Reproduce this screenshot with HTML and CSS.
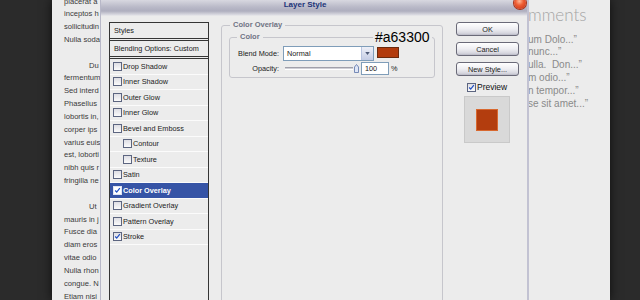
FILE: index.html
```html
<!DOCTYPE html>
<html lang="en">
<head>
    <meta charset="UTF-8">
    <meta name="viewport" content="width=device-width, initial-scale=1.0">
    <title>Layer Style</title>
    <link rel="stylesheet" href="styles.css">
</head>
<body>
    <div id="page">
        <div id="article">
            <p>
                <span>placerat a</span>
                <span>inceptos h</span>
                <span>sollicitudin</span>
                <span>Nulla soda</span>
            </p>
            <p class="indent">
                <span>Du</span>
                <span>fermentum</span>
                <span>Sed interd</span>
                <span>Phasellus</span>
                <span>lobortis in,</span>
                <span>corper ips</span>
                <span>varius euis</span>
                <span>est, loborti</span>
                <span>nibh quis r</span>
                <span>fringilla ne</span>
            </p>
            <p class="indent">
                <span>Ut</span>
                <span>mauris in j</span>
                <span>Fusce dia</span>
                <span>diam eros</span>
                <span>vitae odio</span>
                <span>Nulla rhon</span>
                <span>congue. N</span>
                <span>Etiam nisi</span>
            </p>
        </div>
        <div id="sidebar">
            <h2>mments</h2>
            <ul>
                <li>um Dolo...&rdquo;</li>
                <li>nunc...&rdquo;</li>
                <li>ulla.&nbsp; Don...&rdquo;</li>
                <li>m odio...&rdquo;</li>
                <li>n tempor...&rdquo;</li>
                <li>se sit amet...&rdquo;</li>
            </ul>
        </div>
    </div>

    <div id="layerStyle">
        <div class="titlebar">Layer Style<span class="close"></span></div>
        <div class="dialog-body">
            <div class="styles-list">
                <div class="styles-head">Styles</div>
                <div class="styles-head">Blending Options: Custom</div>
                <ul>
                    <li><span class="check"></span>Drop Shadow</li>
                    <li><span class="check"></span>Inner Shadow</li>
                    <li><span class="check"></span>Outer Glow</li>
                    <li><span class="check"></span>Inner Glow</li>
                    <li><span class="check"></span>Bevel and Emboss</li>
                    <li class="sub"><span class="check"></span>Contour</li>
                    <li class="sub"><span class="check"></span>Texture</li>
                    <li><span class="check"></span>Satin</li>
                    <li class="active"><span class="check"><svg viewBox="0 0 9 9" width="7" height="7"><path d="M1.5 4.5 L3.5 6.5 L7.5 1.5" /></svg></span>Color Overlay</li>
                    <li><span class="check"></span>Gradient Overlay</li>
                    <li><span class="check"></span>Pattern Overlay</li>
                    <li><span class="check"><svg viewBox="0 0 9 9" width="7" height="7"><path d="M1.5 4.5 L3.5 6.5 L7.5 1.5" /></svg></span>Stroke</li>
                </ul>
            </div>

            <fieldset class="group">
                <legend>Color Overlay</legend>
                <fieldset class="group inner">
                    <legend>Color</legend>
                    <div class="field-row">
                        <label>Blend Mode:</label>
                        <div class="select">
                            <span class="select-value">Normal</span>
                            <span class="select-arrow"><svg viewBox="0 0 6 4" width="5" height="3"><path d="M0 0 L6 0 L3 4 Z" /></svg></span>
                        </div>
                        <span class="swatch"></span>
                    </div>
                    <div class="field-row small">
                        <label>Opacity:</label>
                        <span class="slider"></span>
                        <svg class="thumb" viewBox="0 0 5 9" width="5" height="9"><path d="M0.5 3 L2.5 0.5 L4.5 3 L4.5 8.5 L0.5 8.5 Z" /></svg>
                        <span class="num-input">100</span>
                        <span class="unit">%</span>
                    </div>
                </fieldset>
            </fieldset>

            <div class="actions">
                <button>OK</button>
                <button>Cancel</button>
                <button>New Style...</button>
                <label class="preview-check"><span class="check"><svg viewBox="0 0 9 9" width="7" height="7"><path d="M1.5 4.5 L3.5 6.5 L7.5 1.5" /></svg></span>Preview</label>
                <div class="preview"><div class="preview-swatch"></div></div>
            </div>
        </div>
        <div class="hex-note">#a63300</div>
    </div>
</body>
</html>
```

FILE: styles.css
```css
body {
    margin: 0;
    height: 300px;
    overflow: hidden;
    background-color: #2b2b2b;
    font-family: "Liberation Sans", Arial, sans-serif;
}

/* page behind the dialog */

#page {
    margin-left: 52px;
    width: 558px;
    height: 300px;
    display: flex;
    justify-content: space-between;
    background-color: #ececec;
    box-shadow: 0 0 10px rgba(0, 0, 0, 0.7);
}

#article {
    width: 48px;
    height: 304px;
    flex: none;
    box-sizing: border-box;
    padding-left: 12px;
    margin-top: -4.5px;
    overflow: hidden;
    font-size: 7.6px;
    line-height: 12.83px;
    color: #3a3a3a;
}

#article p {
    margin: 0 0 12.83px;
}

#article span {
    display: block;
    white-space: nowrap;
}

#article .indent span:first-child {
    padding-left: 25px;
}

#sidebar {
    width: 82px;
    flex: none;
    overflow: hidden;
}

#sidebar h2 {
    margin: 5px 0 0;
    font-family: Lato, "Liberation Sans", sans-serif;
    font-weight: 300;
    font-size: 17px;
    line-height: 20px;
    color: #a5a5a5;
}

#sidebar ul {
    list-style: none;
    margin: 8.6px 0 0;
    padding: 0;
    font-size: 10px;
    line-height: 12.8px;
    color: #8a8a8a;
    white-space: nowrap;
}

/* Layer Style dialog */

#layerStyle {
    position: absolute;
    left: 100px;
    top: -6px;
    width: 429px;
    height: 306px;
    overflow: hidden;
    box-sizing: border-box;
    background-color: #ececec;
    border-left: 1px solid #b8b8c8;
    border-right: 2px solid #c2c2d2;
    border-radius: 7px 7px 0 0;
    font-size: 7.3px;
    color: #1a1a1a;
}

.titlebar {
    position: relative;
    height: 22px;
    line-height: 22px;
    padding-right: 18px;
    border-radius: 7px 7px 0 0;
    background: linear-gradient(#f2f2f6 0px, #d8d8e0 6px, #b9b9c8 13px, #aeaebe 17px, #dcdce3 21px, #ececec 22px);
    text-align: center;
    font-weight: bold;
    font-size: 8px;
    color: #22357a;
}

.close {
    position: absolute;
    right: 1px;
    top: 3px;
    width: 12px;
    height: 12px;
    border-radius: 50%;
    background: radial-gradient(circle at 45% 35%, #ffb896 0, #ee5d34 40%, #c22e10 100%);
    box-shadow: 0 0 0 1px #a8321a;
}

.dialog-body {
    display: flex;
    align-items: flex-start;
    padding: 6px 0 0 8px;
}

.styles-list {
    width: 100px;
    height: 290px;
    flex: none;
    box-sizing: border-box;
    border: 1px solid #353535;
}

.styles-head {
    height: 15px;
    line-height: 15px;
    padding-left: 4px;
    border-bottom: 3px double #353535;
}

.styles-list ul {
    list-style: none;
    margin: 0;
    padding: 0;
}

.styles-list li {
    height: 15.5px;
    box-sizing: border-box;
    display: flex;
    align-items: center;
    padding-left: 3px;
    border-bottom: 1px solid #fbfbfb;
    color: #222;
}

.styles-list li.sub {
    padding-left: 13px;
}

.styles-list li.active {
    background-color: #3654a6;
    color: white;
    font-weight: bold;
}

.check {
    width: 9px;
    height: 9px;
    flex: none;
    box-sizing: border-box;
    margin-right: 1px;
    display: inline-flex;
    align-items: center;
    justify-content: center;
    border: 1px solid #5c6580;
    background: linear-gradient(#dedee4, #fafafa);
}

.active .check {
    background: white;
    border-color: #dfe4f2;
}

.check svg path {
    fill: none;
    stroke: #2452c4;
    stroke-width: 1.6;
}

.group {
    margin: -2px 0 0 12px;
    width: 222px;
    height: 290px;
    min-width: 0;
    box-sizing: border-box;
    padding: 2px 7px 0;
    border: 1px solid #c6c6cc;
    border-radius: 3px;
}

.group legend {
    margin-left: 1px;
    padding: 0 3px;
    line-height: 10px;
    font-size: 7.5px;
    font-weight: bold;
    color: #6f7383;
}

.group.inner {
    margin: 0;
    width: 206px;
    height: auto;
    padding: 4px 0 2px;
}

.group.inner legend {
    margin-left: 7px;
}

.field-row {
    display: flex;
    align-items: center;
    height: 15px;
}

.field-row.small {
    height: 13px;
    margin-top: 1px;
}

.field-row label {
    width: 49px;
    flex: none;
    text-align: right;
}

.select {
    margin-left: 4px;
    width: 91px;
    height: 15px;
    display: flex;
    box-sizing: border-box;
    border: 1px solid #7f9db9;
    background-color: white;
}

.select-value {
    flex: 1;
    padding-left: 3px;
    line-height: 13px;
}

.select-arrow {
    width: 11px;
    display: flex;
    align-items: center;
    justify-content: center;
    border-left: 1px solid #b8c4e0;
    background: linear-gradient(#eef0f8, #c4cce4);
}

.select-arrow path {
    fill: #4d5a78;
}

.swatch {
    align-self: flex-start;
    margin: 1px 0 0 3px;
    width: 22px;
    height: 11px;
    box-sizing: border-box;
    background-color: #b23b0d;
    border: 1px solid #6a2a0e;
}

.slider {
    margin-left: 6px;
    width: 68px;
    height: 1px;
    border-top: 1px solid #a0a0aa;
    border-bottom: 1px solid #ffffff;
    background-color: #cfcfd6;
}

.thumb {
    margin-left: 1px;
}

.thumb path {
    fill: #dfe6f6;
    stroke: #5a72a8;
    stroke-width: 0.8;
}

.num-input {
    margin-left: 2px;
    width: 28px;
    height: 13px;
    box-sizing: border-box;
    padding-left: 3px;
    line-height: 11px;
    border: 1px solid #7f9db9;
    background-color: white;
}

.unit {
    margin-left: 2px;
}

.actions {
    width: 84px;
    flex: none;
    box-sizing: border-box;
    padding-left: 13px;
    display: flex;
    flex-direction: column;
    align-items: flex-start;
}

button {
    width: 63px;
    height: 14px;
    margin: 0 0 6px;
    padding: 0;
    font-family: "Liberation Sans", Arial, sans-serif;
    font-size: 7.3px;
    color: #222;
    border: 1px solid #6a6a78;
    border-radius: 3px;
    background: linear-gradient(#ffffff, #eeeef2 50%, #d6d6de 85%, #b8b8c4);
}

.preview-check {
    margin-left: 11px;
    height: 10px;
    display: flex;
    align-items: center;
    font-size: 8.5px;
    color: #111;
}

.preview {
    margin: 4px 0 0 8px;
    width: 46px;
    height: 47px;
    box-sizing: border-box;
    display: flex;
    align-items: center;
    justify-content: center;
    background-color: #d9d9d9;
    border: 1px solid #c9c9c9;
}

.preview-swatch {
    width: 22px;
    height: 22px;
    box-sizing: border-box;
    background-color: #b33d0e;
    border: 1px solid #d8682f;
}

/* colour note laid over the screenshot */
.hex-note {
    position: absolute;
    left: 272px;
    top: 36px;
    padding: 0 2px;
    font-size: 14px;
    line-height: 14px;
    color: black;
    background-color: #ececec;
}
```
